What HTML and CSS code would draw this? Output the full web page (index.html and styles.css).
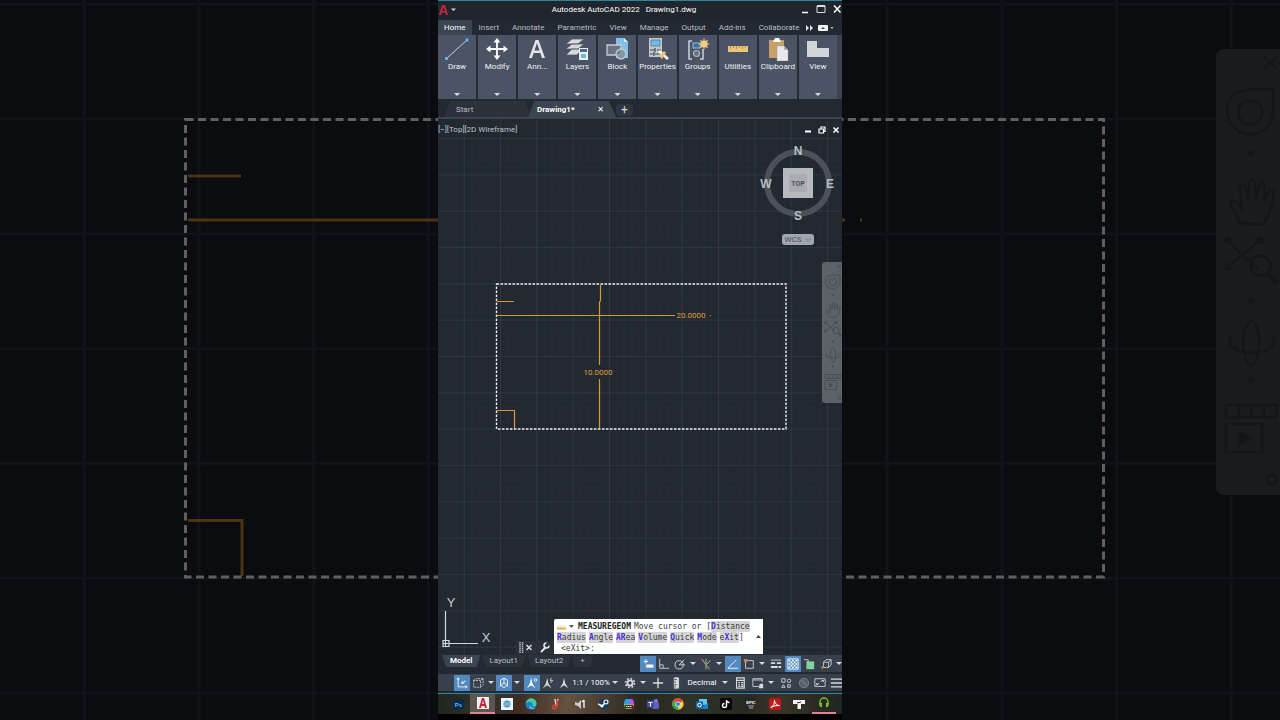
FILE: index.html
```html
<!DOCTYPE html>
<html lang="en">
<head>
<meta charset="utf-8">
<title>Autodesk AutoCAD 2022 - Drawing1.dwg</title>
<link rel="stylesheet" href="styles.css">
</head>
<body>
<svg class="backdrop" viewBox="0 0 1280 720" preserveAspectRatio="xMidYMid slice" aria-hidden="true">
  <defs>
    <symbol id="navicons" viewBox="0 0 20 141">
      <g fill="none" stroke="currentColor" stroke-width=".8">
        <path d="M15 2.500l4 3.500M19 2.500l-4 3.500"/>
        <circle cx="10.700" cy="20" r="3.800"/>
        <path d="M6 14q5-2 12-1v7a7.300 7.300 0 1 1-12-6z"/>
        <path d="M7.500 55c-1-3-3-4-3-7 2-.5 2.500 1.500 3.500 2.500l-.5-7c1.500-1 2 .5 2.500 4l.5-6c1.500-1 2 .5 2 6l1.500-5.500c1.500-.5 1.500 1 1 6l2-3.500c1.500 0 1.300 1 .5 4-.5 3-1.500 5-3 7z"/>
        <path d="M3.500 60.500l9.500 9M14 60.500L3.500 69"/>
        <circle cx="14" cy="68.500" r="3.200"/>
        <path d="M16.200 71l3 3" stroke-width="1.600"/>
        <ellipse cx="11" cy="93" rx="2.500" ry="7"/>
        <path d="M18 91q1.500 5-7 5-6 0-6.500-2.500m0-2.500l-.5 3 3 .5"/>
        <path d="M3 112.500h16v4H3zM7 112.500v4M11 112.500v4M15 112.500v4M3 118.500h11.500v9H3z"/>
        <circle cx="17.500" cy="136" r="1.500"/>
      </g>
      <g fill="currentColor"><circle cx="11" cy="33" r="1"/><circle cx="11" cy="79.500" r="1"/><circle cx="11" cy="104.500" r="1"/><circle cx="3.500" cy="60.500" r="1.200"/><circle cx="14" cy="60.500" r="1.200"/><circle cx="3.500" cy="69" r="1.200"/><path d="M7 120.500l4 2.500-4 2.500z"/></g>
    </symbol>
    <pattern id="grid-far" x="83" y="3" width="114.700" height="114.800" patternUnits="userSpaceOnUse"><path d="M0 0h114.700M0 0v114.800" stroke="#10141a" stroke-width="5"/></pattern>
  </defs>
  <rect width="1280" height="720" fill="#0a0c0f"/>
  <rect width="1280" height="720" fill="url(#grid-far)"/>
  <g fill="none" stroke="#4d3214" stroke-width="3"><path d="M188 176h53M188 220h674"/><path d="M188 520.500h54V576"/></g>
  <rect x="845" y="215" width="15" height="10" fill="#0a0c0f"/>
  <rect x="185.500" y="119.500" width="918" height="457.500" fill="none" stroke="#606060" stroke-width="3" stroke-dasharray="8 4.500"/>
  <rect x="1216" y="49" width="74" height="446" rx="7" fill="#1b1c1e"/>
  <svg x="1216" y="49" width="64" height="446" color="#141618"><use href="#navicons"/></svg>
</svg>

<main class="app">
  <header class="titlebar">
    <button class="appmenu" aria-label="Application menu"><svg width="20" height="12" viewBox="0 0 20 12"><path d="M1 11L4 1h3l3 10H8L7.300 8.500H3.600L3 11zM4 7h3L5.500 3z" fill="#c8283c"/><path d="M13 4.500h5L15.500 7z" fill="#d5d8dc"/></svg></button>
    <h1>Autodesk AutoCAD 2022 <span>Drawing1.dwg</span></h1>
    <div class="winbtns">
      <button aria-label="Minimize"><svg width="10" height="10" viewBox="0 0 10 10"><path d="M2 8.500h6" stroke="#fff" stroke-width="1.500"/></svg></button>
      <button aria-label="Maximize"><svg width="10" height="10" viewBox="0 0 10 10"><path d="M1 2h8v6.500H1z" fill="none" stroke="#ddd"/><path d="M1 2h8" stroke="#ddd" stroke-width="2"/></svg></button>
      <button aria-label="Close"><svg width="10" height="10" viewBox="0 0 10 10"><path d="M2 1.500l6.500 7M8.500 1.500L2 8.500" stroke="#fff" stroke-width="1.500"/></svg></button>
    </div>
  </header>

  <nav class="menu">
    <button class="on">Home</button><button>Insert</button><button>Annotate</button><button>Parametric</button><button>View</button><button>Manage</button><button>Output</button><button>Add-ins</button><button>Collaborate</button>
    <button class="more" aria-label="More tabs"><svg width="28" height="8" viewBox="0 0 28 8"><path d="M0 1l3 3-3 3zM4 1l3 3-3 3z" fill="#e3e5e8"/><rect x="12" y="1" width="10" height="6" rx="1" fill="#f0f1f2"/><path d="M15 5l2-2 2 2z" fill="#444"/><path d="M24.500 3h3L26 5z" fill="#ccc"/></svg></button>
  </nav>

  <section class="ribbon">
    <button><svg viewBox="0 0 24 24"><path d="M2 21L22 3" stroke="#c9d2dc" stroke-width="1"/><path d="M0 20h3v3H0zM20.500 1.500h3v3h-3z" fill="#68aee8"/></svg><span>Draw</span><i></i></button>
    <button><svg viewBox="0 0 24 24"><path d="M12 3v18M2 12h20" stroke="#fff" stroke-width="1.800"/><path d="M12 1l3.500 4.500h-7zM12 23l3.500-4.500h-7zM1 12l4.500-3.500v7zM23 12l-4.500-3.500v7z" fill="#fff"/></svg><span>Modify</span><i></i></button>
    <button><svg viewBox="0 0 24 24"><path d="M4 21L10.500 3h3L20 21h-3l-1.700-5H8.600L7 21zM9.500 13.500h5L12 6z" fill="#e2e4e6"/></svg><span>Ann...</span><i></i></button>
    <button><svg viewBox="0 0 24 24"><path d="M7 2h12l-6 5H1zM7 7h12l-6 5H1zM7 12h10l-5 6H1z" fill="#d8dadc" stroke="#4a5464" stroke-width=".7"/><rect x="14" y="11" width="9" height="12" fill="#eef0f2"/><rect x="15" y="12" width="7" height="3" fill="#496a88"/><rect x="16" y="17" width="5" height="4" fill="#6db8e8"/></svg><span>Layers</span><i></i></button>
    <button><svg viewBox="0 0 24 24"><path d="M11 1h8l4 4v16H11z" fill="#82c0ea"/><path d="M19 1v4h4" fill="#d3ebfa"/><path d="M2 8h14v10H2z" fill="#6a7480" stroke="#c8cccf" stroke-width="1.300"/><circle cx="16" cy="17" r="5" fill="#7c8894" fill-opacity=".7" stroke="#c8cccf" stroke-width="1.300"/></svg><span>Block</span><i></i></button>
    <button><svg viewBox="0 0 24 24"><path d="M3 1h13v19H3z" fill="#c4c8cb"/><path d="M5 3h9v6H5z" fill="#6bbcec" stroke="#4a5464" stroke-width=".6"/><path d="M4 13h5m2 0h4M4 17h3m2 0h5M9 11v4M8 15v4" stroke="#3e4754" stroke-width="1.200"/><path d="M14 13l9 8-2 2-9-8z" fill="#f6f6f6"/><path d="M13 19l5-5 2 2-4 6z" fill="#ecc680"/></svg><span>Properties</span><i></i></button>
    <button><svg viewBox="0 0 24 24"><path d="M6 4H3v18h3M14 22h3V12" fill="none" stroke="#ccd2d8" stroke-width="1.500"/><rect x="7" y="6" width="7" height="5" fill="#3d6f98" stroke="#8bc2e8"/><circle cx="10.500" cy="16.500" r="3" fill="#68717d" stroke="#aeb6be" stroke-width="1.200"/><path d="M18 1l1 3 3-1-1 3 3 1-3 1 1 3-3-1-1 3-1-3-3 1 1-3-3-1 3-1-1-3 3 1z" fill="#f2cc84"/></svg><span>Groups</span><i></i></button>
    <button><svg viewBox="0 0 24 24"><rect x="2" y="9" width="20" height="6" fill="#eec37a"/><path d="M4.500 9v3M7.500 9v2M10.500 9v3M13.500 9v2M16.500 9v3M19.500 9v2" stroke="#9c7433" stroke-width=".7"/></svg><span>Utilities</span><i></i></button>
    <button><svg viewBox="0 0 24 24"><path d="M3 3h15v18H3z" fill="#c9a06a"/><path d="M7 5l2-4h4l2 4z" fill="#fff"/><path d="M11 9h7l4 4v11H11z" fill="#e7e9eb" stroke="#9ea2a6" stroke-width=".5"/><path d="M18 9v4h4" fill="#aaa"/></svg><span>Clipboard</span><i></i></button>
    <button><svg viewBox="0 0 24 24"><path d="M1 4h10v7h12v9H1z" fill="#d3d5d8"/></svg><span>View</span><i></i></button>
  </section>

  <nav class="filetabs">
    <button class="ft">Start</button>
    <button class="ft on">Drawing1* <b>✕</b></button>
    <button class="plus" aria-label="New drawing">+</button>
  </nav>

  <section class="canvas">
    <svg class="drawing" viewBox="438 119 404 536" preserveAspectRatio="xMidYMid slice">
      <defs>
        <pattern id="minor" x="500" y="138" width="7.270" height="7.270" patternUnits="userSpaceOnUse"><path d="M0 .5h7.270M.5 0v7.270" stroke="#232b34" stroke-width="1"/></pattern>
        <pattern id="major" x="500" y="138" width="36.330" height="36.330" patternUnits="userSpaceOnUse"><path d="M0 .5h36.330M.5 0v36.330" stroke="#2d3641" stroke-width="1"/></pattern>
      </defs>
      <rect x="438" y="119" width="404" height="536" fill="url(#minor)"/>
      <rect x="438" y="119" width="404" height="536" fill="url(#major)"/>
      <g fill="none" stroke="#dc9734" stroke-width="1.200"><path d="M497 301.500h17M497 315.500h178M497 410.500h17.500V428M600.500 285v16l-1 1v63M599.500 379v49M710 315.500h1"/></g>
      <rect x="496.500" y="284" width="289.500" height="145" fill="none" stroke="#eef0f1" stroke-width="1.400" stroke-dasharray="2.600 1.400"/>
      <g class="dims"><text x="691" y="318">20.0000</text><text x="598" y="375">10.0000</text></g>
      <g fill="none" stroke="#d4d7da" stroke-width="1.200"><path d="M445.500 611v35M443 643.500h35M443 640.500h6v6h-6z"/></g>
      <g class="axes"><text x="451" y="607">Y</text><text x="486" y="642">X</text></g>
    </svg>
    <div class="viewbar"><span>[−][Top][2D Wireframe]</span>
      <div class="winbtns small">
        <button aria-label="Minimize view"><svg width="8" height="8" viewBox="0 0 8 8"><path d="M1 5.500h6" stroke="#fff" stroke-width="2"/></svg></button>
        <button aria-label="Restore view"><svg width="8" height="8" viewBox="0 0 8 8"><path d="M1 3h4.500v4H1zM3 3V1h4v4.500H5.500" fill="none" stroke="#fff" stroke-width="1.200"/></svg></button>
        <button aria-label="Close view"><svg width="8" height="8" viewBox="0 0 8 8"><path d="M1.500 1.500l5 5M6.500 1.500l-5 5" stroke="#fff" stroke-width="1.500"/></svg></button>
      </div>
    </div>
    <div class="viewcube">
      <svg width="78" height="80" viewBox="0 0 78 80"><circle cx="39" cy="40" r="31" fill="none" stroke="#4a5158" stroke-width="6"/><rect x="24" y="25" width="30" height="30" fill="#b6babd"/><rect x="30" y="31" width="18" height="18" fill="#a9adb3"/>
      <g class="compass"><text x="39" y="12">N</text><text x="39" y="77">S</text><text x="7" y="45">W</text><text x="71" y="45">E</text></g><text class="face" x="39" y="43">TOP</text></svg>
      <button class="wcs">WCS <svg width="8" height="6" viewBox="0 0 8 6"><path d="M1 2h6L4 5z" fill="none" stroke="#7f8694" stroke-width=".8"/></svg></button>
    </div>
    <aside class="navbar" aria-label="Navigation bar"><svg width="20" height="141"><use href="#navicons"/></svg></aside>
    <div class="command">
      <div class="grip"><svg width="36" height="13" viewBox="0 0 36 13"><path d="M4 1v11M6.500 1v11" stroke="#aeb4ba" stroke-width="1.500" stroke-dasharray="1.500 .5"/><path d="M10.500 4l5 5M15.500 4l-5 5" stroke="#e0e3e6" stroke-width="1.400"/><path d="M25 11l5-5" stroke="#e7e9eb" stroke-width="1.800"/><path d="M33 4.500a2.500 2.500 0 1 1-2.500-2.500" fill="none" stroke="#e7e9eb" stroke-width="1.500"/></svg></div>
      <div class="prompt">
        <p><svg width="18" height="8" viewBox="0 0 18 8"><path d="M0 5.500h9" stroke="#dda94c" stroke-width="2"/><path d="M0 3h9" stroke="#eee2ca"/><path d="M12 2h5l-2.500 3z" fill="#555"/></svg><strong>MEASUREGEOM</strong><span>Move cursor or [<button><em>D</em>istance</button></span></p>
        <p><button><em>R</em>adius</button><button><em>A</em>ngle</button><button><em>AR</em>ea</button><button><em>V</em>olume</button><button><em>Q</em>uick</button><button><em>M</em>ode</button><span><button>e<em>X</em>it</button>]</span></p>
        <p class="last">&lt;eXit&gt;:</p>
        <button class="expand" aria-label="Command history"></button>
      </div>
    </div>
  </section>

  <footer class="status">
    <div class="row">
      <nav class="layouts"><button class="on">Model</button><button>Layout1</button><button>Layout2</button><button>+</button></nav>
      <div class="tools">
        <div><button class="on" aria-label="Dynamic input"><svg viewBox="0 0 14 14"><path d="M2 4h5M4.500 1.500v5" stroke="#fff" stroke-width="1.200"/><path d="M5 8h8v3H5z" fill="#fff"/></svg></button><button aria-label="Ortho"><svg viewBox="0 0 14 14"><path d="M2 1v11h11M2 8h4v4" /></svg></button><button aria-label="Polar tracking"><svg viewBox="0 0 14 14"><circle cx="6" cy="8" r="4.800"/><path d="M6 8l6-6M6 8h7"/></svg></button><i></i><button aria-label="Isodraft"><svg viewBox="0 0 14 14"><path d="M2 1l9 12" stroke="#d0757a" stroke-width="1.300"/><path d="M7 1v12" stroke="#6fba80" stroke-width="1.300"/><path d="M8 7l4-4"/></svg></button><i></i></div>
        <div><button class="on" aria-label="Object snap tracking"><svg viewBox="0 0 14 14"><path d="M1 12L11 2M1 12h12" stroke="#fff"/></svg></button><button aria-label="Object snap"><svg viewBox="0 0 14 14"><path d="M3 3h9v9H3z"/><path d="M1 1h4v4H1z" fill="#ce7c4f" stroke="none"/></svg></button><i></i></div>
        <div><button aria-label="Lineweight"><svg viewBox="0 0 14 14"><path d="M1 2.500h12" /><path d="M1 6h5m2 0h5" stroke-width="2"/><path d="M1 10.500h8m1 0h3" stroke-width="2.500"/></svg></button></div>
        <div><button class="on" aria-label="Transparency"><svg viewBox="0 0 14 14"><path d="M1 1h12v12H1z" stroke="#fff"/><path d="M2 3h10M2 7h10M2 11h10" stroke="#fff" stroke-width="2" stroke-dasharray="2 2"/><path d="M4 5h8M4 9h8" stroke="#fff" stroke-width="2" stroke-dasharray="2 2"/></svg></button><button aria-label="Selection cycling"><svg viewBox="0 0 14 14"><path d="M4 4h9v9H4z" fill="#7fd59a" stroke="none"/><path d="M1 2h5v3"/></svg></button></div>
        <div><button aria-label="3D object snap"><svg viewBox="0 0 14 14"><path d="M4 5h6v6H4zM4 5l3-3h6l-3 3M13 2v6l-3 3"/><circle cx="3" cy="11" r="1.500" fill="#ce7c4f" stroke="none"/></svg></button><i></i></div>
      </div>
    </div>
    <div class="row">
      <div class="tools wide">
        <div><button class="on" aria-label="Dynamic UCS"><svg viewBox="0 0 14 14"><path d="M2.500 1v10.500H13M1 3l1.500-2L4 3M11 10l2 1.500-2 1.500M6 8l2-3v3l3-4" stroke="#fff"/></svg></button><button aria-label="Selection filter"><svg viewBox="0 0 14 14"><path d="M2 4h8v8H2zM2 4l3-2h8l-3 2M13 2v7l-3 3" stroke-dasharray="2 1"/></svg></button><i></i><button class="on" aria-label="Gizmo"><svg viewBox="0 0 14 14"><path d="M7 7V1M7 7l-5 4M7 7l5 4M3 3.500l4-2 4 2v6l-4 3-4-3z" stroke="#fff"/></svg></button><i></i></div>
        <div><button class="on" aria-label="Annotation visibility"><svg viewBox="0 0 14 14"><path d="M6 1l1.500 6.500L11 13 6 9.500 1 13l3.500-5.500z" fill="#fff" stroke="none"/><circle cx="11" cy="3.500" r="1.500" stroke="#fff"/></svg></button><button aria-label="Auto scale"><svg viewBox="0 0 14 14"><path d="M6 1l1.500 6.500L11 13 6 9.500 1 13l3.500-5.500z" fill="#d7dadd" stroke="none"/><path d="M11 1l-1.500 3h3L10 7"/></svg></button><button aria-label="Annotation scale"><svg viewBox="0 0 14 14"><path d="M7 1l1.500 6.500L12 13 7 9.500 2 13l3.500-5.500z" fill="#d7dadd" stroke="none"/></svg></button><button class="label">1:1 / 100%</button><i></i></div>
        <div><button aria-label="Workspace settings"><svg viewBox="0 0 14 14"><circle cx="7" cy="7" r="3" stroke-width="2.200"/><circle cx="7" cy="7" r="5.200" stroke-width="2" stroke-dasharray="2 2.080"/></svg></button><i></i></div>
        <div><button aria-label="Annotation monitor"><svg viewBox="0 0 14 14"><path d="M7 1v12M1 7h12" stroke-width="1.600"/></svg></button></div>
        <div><button aria-label="Units"><svg viewBox="0 0 14 14"><path d="M5 1h5v12H5z" fill="#d7dadd"/><path d="M5 3h3M5 6h2M5 9h3M5 11.500h2" stroke="#444"/></svg></button><button class="label unit">Decimal</button><i></i></div>
        <div><button aria-label="Quick properties"><svg viewBox="0 0 14 14"><path d="M3 1h9v12H3zM3 4h9M5 6.500h2m1 0h3M5 9h2m1 0h3M5 11h2m1 0h3" stroke-width="1.300"/></svg></button></div>
        <div><button aria-label="Lock UI"><svg viewBox="0 0 14 14"><path d="M8 11H1V2h11v4M1 3.500h11"/><path d="M9 8h4v5H8z" fill="#d7dadd" stroke="none"/></svg></button><i></i></div>
        <div><button aria-label="Isolate objects"><svg viewBox="0 0 14 14"><path d="M2 2h4v4H2z"/><circle cx="10.500" cy="4.500" r="2"/><path d="M4 9l2 3H2zM9 9h3v3H9z"/></svg></button></div>
        <div><button aria-label="Hardware acceleration"><svg viewBox="0 0 14 14"><circle cx="7" cy="7" r="5.500" fill="#566170" stroke="#7d8793"/><path d="M4 4l6 6" stroke="#8c96a2"/></svg></button><button aria-label="Clean screen"><svg viewBox="0 0 14 14"><path d="M1 2h12v9H1zM3 9l3-2M8 5l3-1M9 4h2v2M3 7v2h2"/></svg></button><button aria-label="Customization"><svg viewBox="0 0 14 14"><path d="M1 2.500h13M1 7h13M1 11.500h13" stroke-width="1.600"/></svg></button></div>
      </div>
    </div>
  </footer>

  <nav class="taskbar" aria-label="Taskbar">
    <button aria-label="Photoshop"><svg viewBox="0 0 12 12"><rect x="1" y="1" width="11" height="10" rx="1" fill="#072b4c"/><text x="6.500" y="8.500" fill="#61b9ed">Ps</text></svg></button>
    <button class="on" aria-label="AutoCAD"><svg viewBox="0 0 12 12"><rect width="12" height="12" fill="#f3eff0"/><path d="M2 11L5 1h2l3 10H8l-.6-2H4.600L4 11zM5.100 7h1.800L6 3.500z" fill="#c52036"/></svg></button>
    <button aria-label="Viewer"><svg viewBox="0 0 12 12"><rect width="12" height="12" fill="#eef5fa"/><circle cx="6" cy="6" r="3.500" fill="#4793c6"/><path d="M3 5h6M3 7h6" stroke="#b5d8ef" stroke-width=".8"/></svg></button>
    <button aria-label="Edge"><svg viewBox="0 0 12 12"><circle cx="6" cy="6" r="5.500" fill="#1587cd"/><path d="M1 5a5.200 5.200 0 0 1 10.500 1c0 3-4 3-4 1 1-4-4-4-6.500-2z" fill="#48cba0"/><path d="M5 7c0 3 3 4 5.500 2.500C8 12 4 11 5 7z" fill="#bde9f6"/></svg></button>
    <button aria-label="Snipping tool"><svg viewBox="0 0 12 12"><path d="M5 1l1 6M8 1L6 7" stroke="#d7dce1" stroke-width="1.500"/><circle cx="4.500" cy="9" r="1.800" fill="none" stroke="#d94536" stroke-width="1.500"/><path d="M7 2v7" stroke="#d94536" stroke-width="2"/></svg></button>
    <button aria-label="Sound"><svg viewBox="0 0 12 12"><path d="M1 4l3 1 3-3v9L4 8 1 7z" fill="#c7cbd0"/><path d="M10 2v8M8 4l2-2" stroke="#e6e8ea" stroke-width="1.500"/></svg></button>
    <button aria-label="Steam"><svg viewBox="0 0 12 12"><circle cx="6" cy="6" r="5.500" fill="#183c5c"/><circle cx="8" cy="4" r="2" fill="none" stroke="#fff" stroke-width="1.200"/><circle cx="4" cy="8" r="1.500" fill="#fff"/><path d="M0 6l4 2 3-3" stroke="#fff" stroke-width="1.500" fill="none"/></svg></button>
    <button aria-label="Microsoft 365"><svg viewBox="0 0 12 12"><path d="M6 6V1H3Q1 2 1 6z" fill="#25a4dd"/><path d="M6 6V1h3q2 1 2 5z" fill="#a95ddd"/><path d="M1 6h5v5H3Q1 9 1 6z" fill="#7fc452"/><path d="M6 6h5q0 4-3 5H6z" fill="#ef894b"/><rect x="2" y="7" width="8" height="3" fill="#2a2730"/><path d="M3 8.500h6" stroke="#fff" stroke-dasharray="1.500 .5"/></svg></button>
    <button aria-label="Teams"><svg viewBox="0 0 12 12"><circle cx="9" cy="3" r="2" fill="#7b83eb"/><rect x="5" y="4" width="7" height="7" rx="2" fill="#5c63c5"/><rect y="2.500" width="7" height="7" fill="#424aaa"/><path d="M1.500 4.500h4M3.500 4.500v4" stroke="#fff"/></svg></button>
    <button aria-label="Chrome"><svg viewBox="0 0 12 12"><circle cx="6" cy="6" r="5.700" fill="#f5c93b"/><path d="M6 6L1 3a5.700 5.700 0 0 1 10 0z" fill="#df4736"/><path d="M6 6v5.700A5.700 5.700 0 0 1 1 3z" fill="#36a854"/><circle cx="6" cy="6" r="2.600" fill="#fff"/><circle cx="6" cy="6" r="2" fill="#397fe5"/></svg></button>
    <button aria-label="Outlook"><svg viewBox="0 0 12 12"><rect x="3" y="1" width="8" height="6" fill="#62c5f0"/><path d="M2 5l5 3 5-3v6H3z" fill="#207fc5"/><rect y="3.500" width="7" height="7" fill="#0f66b4"/><circle cx="3.500" cy="7" r="1.800" fill="none" stroke="#fff"/></svg></button>
    <button aria-label="TikTok"><svg viewBox="0 0 12 12"><rect width="12" height="12" rx="2" fill="#090909"/><path d="M6.500 2v5.500a2 2 0 1 1-2-2M6.500 2q0 2.500 3 2.500" fill="none" stroke="#fff" stroke-width="1.400"/></svg></button>
    <button aria-label="Epic Games"><svg viewBox="0 0 12 12"><path d="M1 0h10v9l-5 3-5-3z" fill="#29282b"/><text class="epic" x="6" y="6" fill="#fff">EPIC</text><path d="M3 8h6M4 10h4" stroke="#ccc" stroke-width=".8"/></svg></button>
    <button aria-label="Acrobat"><svg viewBox="0 0 12 12"><rect width="12" height="12" rx="2" fill="#bd1919"/><path d="M2 9.500Q6 7 5.500 2.500q1 5 5 5-5-.5-8.500 2z" fill="none" stroke="#fff"/></svg></button>
    <button aria-label="T app"><svg viewBox="0 0 12 12"><path d="M0 2h12v4H8v5H4.500V6H0z" fill="#f4f4f4"/><path d="M4 5l4-1" stroke="#222"/></svg></button>
    <button class="run" aria-label="Headphones"><svg viewBox="0 0 12 12"><path d="M2 8V5a4 4 0 0 1 8 0v3" fill="none" stroke="#79bc31" stroke-width="1.500"/><path d="M1 6h3v4H2zM8 6h3l-1 4H8z" fill="#79bc31"/></svg></button>
  </nav>
</main>
</body>
</html>
```
FILE: styles.css
```css
* { box-sizing: border-box; }
body {
  margin: 0;
  background: #0a0c0f;
  font: 8px/12px Roboto, "Open Sans", sans-serif;
  color: #d5d8dc;
}
button {
  border: 0;
  padding: 0;
  margin: 0;
  background: none;
  color: inherit;
  font: inherit;
}
svg { display: block; }
.backdrop {
  position: fixed;
  inset: 0;
  width: 100%;
  height: 100%;
  z-index: -1;
}
.app {
  width: min(100%, 404px);
  min-height: 100vh;
  margin: 0 auto;
  display: flex;
  flex-direction: column;
  overflow: hidden;
  background: #222932;
  border-top: 1px solid #2b879e;
  border-bottom: 6px solid #000;
}

/* Title bar and ribbon */
.titlebar {
  display: grid;
  grid-template-columns: 20px 1fr 52px;
  align-items: start;
  height: 19px;
  padding-top: 3px;
  background: #20262e;
}
.titlebar h1 {
  margin: 0;
  font-size: 8px;
  font-weight: 400;
  line-height: 12px;
  color: #fff;
  text-align: center;
  white-space: nowrap;
}
.titlebar h1 span { margin-left: 4px; }
.winbtns {
  display: flex;
  align-items: center;
  justify-content: flex-end;
  gap: 6px;
}
.menu {
  display: flex;
  align-items: stretch;
  gap: 1px;
  height: 15px;
  color: #b9bec5;
  white-space: nowrap;
}
.menu button { padding: 0 6px; }
.menu .on {
  background: #3b4451;
  color: #fff;
}
.menu .more {
  margin-left: auto;
  padding: 0 8px 0 0;
}
.ribbon {
  display: grid;
  grid-template-columns: repeat(10, 1fr);
  gap: 2px;
  height: 64px;
  background: #252c36;
  border-right: 5px solid #3b4450;
  color: #f0f2f4;
}
.ribbon button {
  display: flex;
  flex-direction: column;
  align-items: center;
  min-width: 0;
  padding: 2px 0 3px;
  background: #4a5464;
}
.ribbon svg {
  width: 24px;
  height: 24px;
}
.ribbon i { margin-top: auto; }
i {
  flex: none;
  width: 10px;
  height: 3px;
  background: #d7dade;
  clip-path: polygon(20% 0, 80% 0, 50% 100%);
}

/* File tabs */
.filetabs {
  display: flex;
  align-items: flex-end;
  height: 20px;
  padding-left: 6px;
  background: #222932;
  border-bottom: 2px solid #3b4450;
}
.ft {
  width: 88px;
  height: 16px;
  padding: 2px 12px 0;
  text-align: left;
  background: #2b323c;
  color: #b9bec5;
  clip-path: polygon(7% 0, 92% 0, 100% 100%, 0 100%);
}
.ft.on {
  display: flex;
  align-items: center;
  justify-content: space-between;
  margin-left: -4px;
  padding-right: 12px;
  padding-left: 9px;
  background: #3b4450;
  color: #fff;
  font-weight: 700;
}
.ft b { font: 8px/12px "DejaVu Sans", sans-serif; }
.plus {
  width: 17px;
  height: 12px;
  margin-bottom: 1px;
  background: #2e3640;
  border-radius: 4px;
  font-size: 12px;
}

/* Drawing area */
.canvas {
  position: relative;
  flex: 1;
  min-height: 400px;
  background: #212830;
}
.drawing {
  position: absolute;
  inset: 0;
  width: 100%;
  height: 100%;
}
.dims text {
  fill: #e09f40;
  font: 8px Roboto, sans-serif;
  text-anchor: middle;
}
.axes text {
  fill: #c9cdd1;
  font: 13px "Liberation Sans", sans-serif;
  text-anchor: middle;
}
.viewbar {
  position: relative;
  display: flex;
  justify-content: space-between;
  padding: 5px 2px 0 0;
  color: #bfc4ca;
}
.viewcube {
  position: absolute;
  top: 24px;
  right: 5px;
  display: flex;
  flex-direction: column;
  align-items: center;
  gap: 11px;
}
.compass text {
  fill: #b9bdc1;
  font: bold 12px "Liberation Sans", sans-serif;
  text-anchor: middle;
}
.face {
  fill: #4d5156;
  font: bold 7px Roboto, sans-serif;
  text-anchor: middle;
}
.wcs {
  display: flex;
  align-items: center;
  justify-content: center;
  gap: 2px;
  width: 32px;
  height: 11px;
  border-radius: 3px;
  background: #a2a6b0;
  color: #4e535c;
}
.navbar {
  position: absolute;
  top: 143px;
  right: 0;
  border-radius: 3px 0 0 3px;
  background: #5b6268;
  color: #444b51;
}
.command {
  position: absolute;
  right: 79px;
  bottom: 1px;
  display: flex;
  align-items: flex-end;
  font: 8px/11px "DejaVu Sans Mono", monospace;
}
.grip {
  padding-right: 2px;
  background: #2a3139;
}
.prompt {
  position: relative;
  width: 209px;
  padding: 2px 3px 0;
  background: #fff;
  color: #3a3a3a;
  border-radius: 2px 0 0 0;
}
.prompt p {
  display: flex;
  align-items: center;
  gap: 3px;
  margin: 0;
  white-space: nowrap;
}
.prompt strong { color: #222; }
.prompt p button {
  background: #d4d4d6;
  border-radius: 1px;
}
.prompt em {
  font-style: normal;
  font-weight: 700;
  color: #4733d6;
}
.prompt .last { padding-left: 4px; }
.expand {
  position: absolute;
  right: 2px;
  top: 16px;
  width: 5px;
  height: 3px;
  background: #444;
  clip-path: polygon(50% 0, 100% 100%, 0 100%);
}

/* Status bar */
.status {
  background: #222932;
  border-bottom: 1px solid #2b87a5;
}
.row {
  display: flex;
  height: 19px;
}
.layouts {
  flex: 0 0 50%;
  display: flex;
  align-items: flex-start;
  gap: 1px;
  padding-left: 4px;
  color: #b9bec5;
}
.layouts button {
  height: 12px;
  padding: 0 8px;
  background: #2b323c;
  clip-path: polygon(0 0, 100% 0, 90% 100%, 10% 100%);
}
.layouts .on {
  background: #3b4450;
  color: #fff;
  font-weight: 700;
}
.tools {
  flex: 1;
  display: flex;
  gap: 1px;
  height: 17px;
  background: #37404c;
}
.tools.wide {
  gap: 2px;
  padding-left: 16px;
}
.tools div {
  display: flex;
  align-items: center;
}
.tools button {
  width: 16px;
  height: 16px;
  padding: 2px;
}
.tools .on { background: #5489c0; }
.tools .label {
  width: 38px;
  padding: 0;
  color: #fff;
  white-space: nowrap;
}
.tools .unit { width: 36px; }
.tools svg {
  width: 12px;
  height: 12px;
  fill: none;
  stroke: #d7dadd;
}

/* Taskbar */
.taskbar {
  display: flex;
  height: 20px;
  padding: 0 6px 0 8px;
  background: linear-gradient(100deg, #20241d 0, #30362b 12%, #3d2b22 20%, #66523f 32%, #4f3f32 40%, #28271f 50%, #2f3327 62%, #262a22 75%, #3b3328 84%, #20251f);
}
.taskbar button {
  flex: 1;
  display: grid;
  place-items: center;
}
.taskbar .on {
  background: #5b5650;
  border-bottom: 2px solid #e48291;
}
.taskbar .run { border-bottom: 2px solid #e48291; }
.taskbar svg {
  width: 12px;
  height: 12px;
}
.taskbar text {
  font: bold 6px "Liberation Sans", sans-serif;
  text-anchor: middle;
}
.taskbar .epic { font-size: 4px; }
```
